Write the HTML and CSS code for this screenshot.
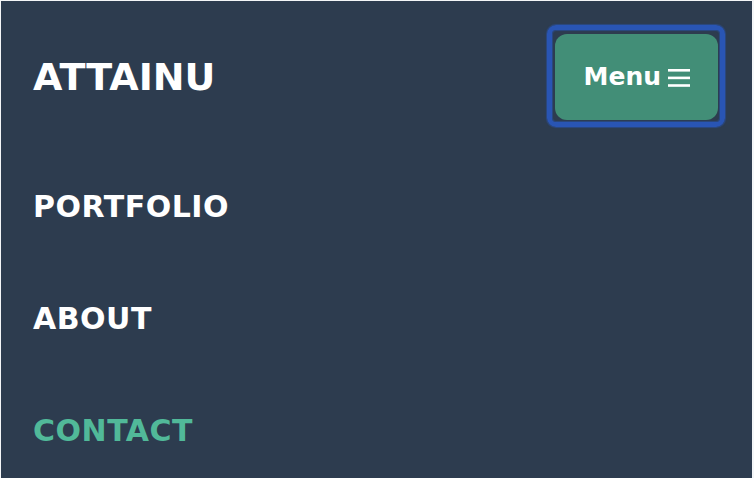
FILE: index.html
```html
<!DOCTYPE html>
<html lang="en">
<head>
<meta charset="utf-8">
<title>AttainU</title>
<link rel="stylesheet" href="styles.css">
</head>
<body>
<div class="page">
  <header class="header">
    <a class="logo" href="#">ATTAINU</a>
    <button class="menu" type="button">
      <span class="menu-label">Menu</span>
      <svg class="menu-icon" width="22" height="18" viewBox="0 0 22 18" aria-hidden="true">
        <rect x="0" y="0" width="22" height="2.6" fill="#fff"/>
        <rect x="0" y="7.6" width="22" height="2.6" fill="#fff"/>
        <rect x="0" y="15.2" width="22" height="2.6" fill="#fff"/>
      </svg>
    </button>
  </header>
  <nav class="nav">
    <a class="nav-link" href="#">PORTFOLIO</a>
    <a class="nav-link" href="#">ABOUT</a>
    <a class="nav-link nav-link--active" href="#">CONTACT</a>
  </nav>
</div>
</body>
</html>
```
FILE: styles.css
```css
html, body {
  margin: 0;
  height: 100%;
}
body {
  background: #f4f6f8;
  padding: 1px 2px 0 1px;
  box-sizing: border-box;
  overflow: hidden;
}
.page {
  height: 100%;
  background: #2d3c4f;
  font-family: "DejaVu Sans", sans-serif;
  font-weight: 700;
  color: #fff;
}
.header {
  display: flex;
  align-items: center;
  justify-content: space-between;
  padding: 33px 34px 0 32px;
}
.logo {
  color: #fff;
  text-decoration: none;
  font-size: 38px;
  line-height: 44px;
}
.menu {
  position: relative;
  display: flex;
  align-items: center;
  gap: 7px;
  height: 86px;
  padding: 0 28px 0 29px;
  border: 0;
  border-radius: 12px;
  background: #428e77;
  color: #fff;
  font-family: "DejaVu Sans", sans-serif;
  font-weight: 700;
  font-size: 25px;
  cursor: pointer;
}
.menu::before {
  content: "";
  position: absolute;
  top: -9px;
  left: -8px;
  right: -7px;
  bottom: -7px;
  border: 5px solid #2955b4;
  border-radius: 9px;
  box-shadow: 0 0 1px 1px rgba(41, 85, 180, 0.5), inset 0 0 1px 1px rgba(41, 85, 180, 0.5);
  pointer-events: none;
}
.menu-label {
  line-height: 30px;
}
.menu-icon {
  display: block;
  margin-top: 2px;
}
.nav {
  display: flex;
  flex-direction: column;
  padding: 31px 32px 0 32px;
}
.nav-link {
  color: #fff;
  text-decoration: none;
  font-size: 30px;
  letter-spacing: 0.5px;
  line-height: 112px;
}
.nav-link--active {
  color: #51b999;
}
```
